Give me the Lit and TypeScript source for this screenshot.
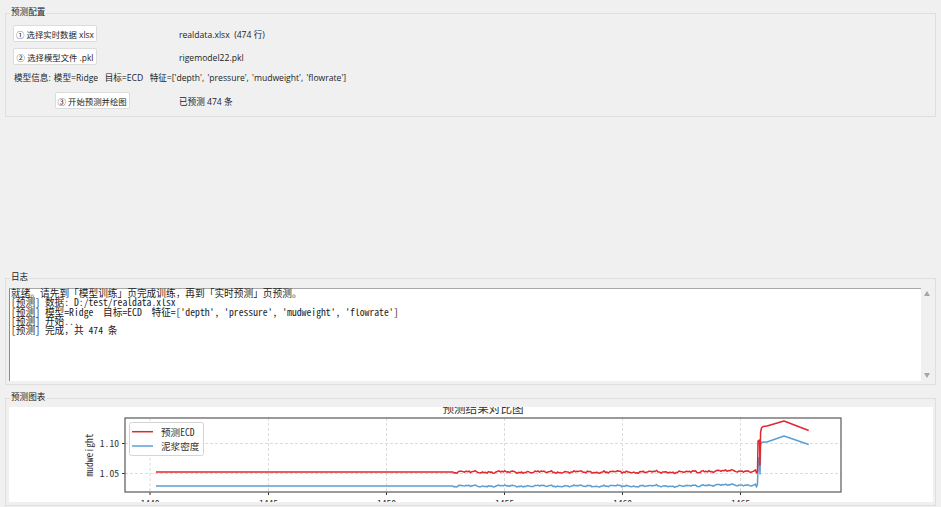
import { LitElement, css, html, svg } from 'lit';
import { customElement } from 'lit/decorators.js';

const LOG_LINES = [
  '就绪。请先到「模型训练」页完成训练，再到「实时预测」页预测。',
  '[预测] 数据: D:/test/realdata.xlsx',
  "[预测] 模型=Ridge  目标=ECD  特征=['depth', 'pressure', 'mudweight', 'flowrate']",
  '[预测] 开始...',
  '[预测] 完成，共 474 条',
];

const X_TICKS = [
  { x: 150, label: '1440' },
  { x: 268.5, label: '1445' },
  { x: 386.5, label: '1450' },
  { x: 504.5, label: '1455' },
  { x: 622.5, label: '1460' },
  { x: 740.5, label: '1465' },
];

const Y_TICKS = [
  { y: 443.5, label: '1.10' },
  { y: 473.5, label: '1.05' },
];

// small repeatable wobble for the part of the run where values start moving
function wobble (x: number) {
  return (
    Math.sin(x * 0.83) * 0.45 +
    Math.sin(x * 1.91 + 1.3) * 0.4 +
    Math.sin(x * 0.17 + 0.6) * 0.45 +
    Math.sin(x * 3.7) * 0.3
  );
}

function series (base: number, tail: number[][], gain: number) {
  const points: number[][] = [[156, base], [453, base]];
  for (let x = 454; x < 756; x += 1.5) {
    const drift = x > 700 ? -1 : 0;
    points.push([x, base + drift + wobble(x) * gain]);
  }
  return [...points, ...tail].map((p) => `${p[0].toFixed(1)},${p[1].toFixed(1)}`).join(' ');
}

const RED_LINE = series(472, [
  [756.5, 473], [757.5, 472], [758, 441], [759.5, 440], [760, 465], [760.6, 432],
  [761.5, 428], [763, 426.5], [767, 426], [784, 421], [808.7, 430.5],
], 1.25);

const BLUE_LINE = series(486, [
  [756.5, 487], [757.5, 484], [758.2, 458], [759.2, 458], [760, 474], [760.6, 445],
  [761.5, 442.5], [764, 442], [767, 442], [784, 436], [808.7, 444.5],
], 1);

@customElement('app-root')
export class AppRoot extends LitElement {
  static styles = css`
    :host {
      display: flex;
      flex-direction: column;
      box-sizing: border-box;
      width: 941px;
      height: 507px;
      padding-bottom: 1px;
      overflow: hidden;
      background: #f0f0f0;
      color: #222;
      font-family: 'Open Sans', 'Noto Sans CJK SC', sans-serif;
      font-size: 8.6px;
    }
    .group {
      position: relative;
      box-sizing: border-box;
      margin: 0 5px;
      border: 1px solid #dfdfdf;
    }
    .title {
      position: absolute;
      left: 4px;
      top: -8px;
      padding: 0 1px;
      background: #f0f0f0;
      line-height: 12px;
    }
    .config {
      margin-top: 13px;
      height: 104px;
      padding: 11px 7px 0;
      display: grid;
      grid-template-columns: 158px 1fr;
      grid-template-rows: 17px 23px 19px 25px;
      column-gap: 8px;
      align-items: end;
    }
    .value {
      line-height: 17px;
      margin-bottom: -2px;
    }
    .info {
      grid-column: 1 / 3;
      padding-left: 1px;
      word-spacing: 1px;
      line-height: 13px;
      margin-bottom: -1px;
    }
    button {
      box-sizing: border-box;
      height: 17px;
      padding: 2px 2px 0;
      width: 84px;
      border: 1px solid #dcdcdc;
      border-radius: 2px;
      background: #fff;
      color: inherit;
      font: inherit;
      font-size: 8.4px;
      line-height: 13px;
      white-space: nowrap;
    }
    button.run {
      width: 75px;
      justify-self: center;
    }
    .spacer { flex: 1; }
    .log {
      height: 107px;
      padding: 9px 14px 3px 3px;
    }
    .log-box {
      height: 93px;
      box-sizing: border-box;
      padding: 0 1px;
      background: #fff;
      border-top: 1px solid #a8a8a8;
      border-left: 1px solid #8a8a8a;
      font-family: 'Noto Sans Mono CJK SC', 'Noto Sans CJK SC', 'Liberation Mono', monospace;
      font-size: 9.7px;
      line-height: 9.33px;
      color: #1c1c1c;
      white-space: pre;
    }
    .arrow {
      position: absolute;
      left: 918px;
      width: 0;
      height: 0;
      border-left: 3.5px solid transparent;
      border-right: 3.5px solid transparent;
    }
    .arrow.up { top: 12px; border-bottom: 5px solid #a6a6a6; }
    .arrow.down { top: 94px; border-top: 5px solid #a6a6a6; }
    .chart {
      margin-top: 13px;
      height: 108px;
      padding: 8px 3px 4px;
    }
    svg {
      display: block;
      width: 924px;
      height: 95px;
      background: #fff;
      font-family: 'Noto Sans Mono CJK SC', 'Noto Sans CJK SC', 'DejaVu Sans Mono', monospace;
      font-size: 9.6px;
      fill: #333;
    }
    .grid {
      stroke: #dcdcdc;
      stroke-width: 1;
      stroke-dasharray: 3 2;
    }
    .tick { stroke: #333; stroke-width: 1; }
    .frame { fill: none; stroke: #666; stroke-width: 1.3; }
    .line { fill: none; stroke-width: 1.5; stroke-linejoin: round; }
    .line.red { stroke: #e0282e; }
    .line.blue { stroke: #5a9fd4; }
    .legend { fill: #fff; fill-opacity: 0.85; stroke: #d4d4d4; stroke-width: 1; }
    .plot-title { font-size: 11.6px; text-anchor: middle; }
  `;

  renderChart () {
    return html`
      <svg viewBox="9 407 924 95">
        ${X_TICKS.map((t) => svg`
          <line class="grid" x1=${t.x} x2=${t.x} y1="418" y2="492"></line>
          <line class="tick" x1=${t.x} x2=${t.x} y1="492" y2="495"></line>
          <text x=${t.x} y="507" text-anchor="middle">${t.label}</text>
        `)}
        ${Y_TICKS.map((t) => svg`
          <line class="grid" x1="125" x2="841" y1=${t.y} y2=${t.y}></line>
          <line class="tick" x1="122" x2="125" y1=${t.y} y2=${t.y}></line>
          <text x="119" y=${t.y + 3.5} text-anchor="end">${t.label}</text>
        `)}
        <polyline class="line blue" points=${BLUE_LINE}></polyline>
        <polyline class="line red" points=${RED_LINE}></polyline>
        <rect class="frame" x="125" y="418" width="716" height="74"></rect>
        <text class="plot-title" x="483" y="413">预测结果对比图</text>
        <text transform="translate(93 455) rotate(-90)" text-anchor="middle">mudweight</text>
        <rect class="legend" x="129.5" y="422.5" width="74" height="33" rx="2"></rect>
        <line class="line red" x1="132" x2="153" y1="431.7" y2="431.7"></line>
        <line class="line blue" x1="132" x2="153" y1="446" y2="446"></line>
        <text x="161" y="435.5">预测ECD</text>
        <text x="161" y="450">泥浆密度</text>
      </svg>
    `;
  }

  render () {
    return html`
      <section class="group config">
        <span class="title">预测配置</span>
        <button>① 选择实时数据 xlsx</button>
        <span class="value">realdata.xlsx&nbsp; (474 行)</span>
        <button>② 选择模型文件 .pkl</button>
        <span class="value">rigemodel22.pkl</span>
        <span class="info">模型信息: 模型=Ridge&nbsp; 目标=ECD&nbsp; 特征=['depth', 'pressure', 'mudweight', 'flowrate']</span>
        <button class="run">③ 开始预测并绘图</button>
        <span class="value">已预测 474 条</span>
      </section>
      <div class="spacer"></div>
      <section class="group log">
        <span class="title">日志</span>
        <div class="log-box">${LOG_LINES.join('\n')}</div>
        <span class="arrow up"></span>
        <span class="arrow down"></span>
      </section>
      <section class="group chart">
        <span class="title">预测图表</span>
        ${this.renderChart()}
      </section>
    `;
  }
}
